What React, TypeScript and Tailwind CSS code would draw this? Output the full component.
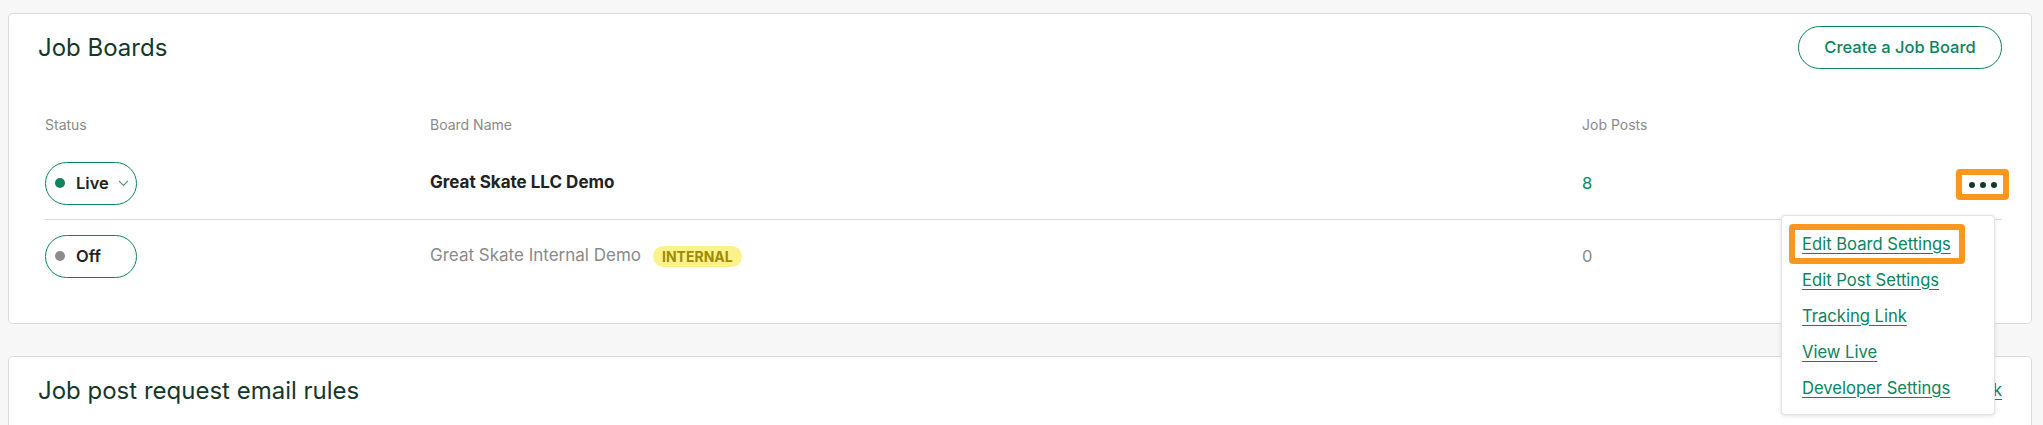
import { useState } from 'react';

const menuItems = [
  'Edit Board Settings',
  'Edit Post Settings',
  'Tracking Link',
  'View Live',
  'Developer Settings',
];

function StatusPill({ live }: { live: boolean }) {
  return (
    <button className="flex h-[43px] w-[92px] items-center rounded-full border border-[#0b8460] pl-[9px]">
      <span
        className={
          live
            ? 'h-[10px] w-[10px] rounded-full bg-[#0b8460]'
            : 'h-[10px] w-[10px] rounded-full bg-[#8c8c8c]'
        }
      />
      <span className="ml-[11px] text-[16.5px] font-semibold text-[#222222]">{live ? 'Live' : 'Off'}</span>
      {live && (
        <svg className="ml-[9px]" width="11" height="7" viewBox="0 0 11 7" fill="none">
          <polyline points="1,1 5.5,5.5 10,1" stroke="#5f8f7c" strokeWidth="1.1" />
        </svg>
      )}
    </button>
  );
}

function ActionsMenu() {
  return (
    <div className="absolute right-[14px] top-[46px] z-10 w-[214px] rounded-[4px] border border-[#e3e3e3] bg-white pt-[10px] pb-[8px] shadow-[0_1px_4px_rgba(0,0,0,0.12)]">
      <div className="pointer-events-none absolute left-[7px] top-[8px] h-[40px] w-[176px] rounded-[4px] border-[6px] border-[#fb961f]" />
      {menuItems.map((item) => (
        <a
          key={item}
          href="#"
          className="flex h-9 items-center pl-5 text-[16.6px] text-[#0b8460] underline underline-offset-[3px]"
        >
          {item}
        </a>
      ))}
    </div>
  );
}

export default function App() {
  const [open] = useState(true);

  return (
    <div className="min-h-screen bg-[#f7f7f7] pt-[13px] pl-2 pr-[11px] font-['Inter',sans-serif]">
      <section className="rounded-[5px] border border-[#d9d9d9] bg-white px-[29px] pt-3 pb-[31px]">
        <div className="flex h-[43px] items-center justify-between">
          <h2 className="text-[24px] text-[#15372c]">Job Boards</h2>
          <button className="h-[43px] w-[204px] rounded-full border border-[#0b8460] text-[16.5px] font-medium text-[#0b8460]">
            Create a Job Board
          </button>
        </div>

        <div className="ml-[7px] mt-[45px]">
          <div className="grid h-5 grid-cols-[385px_1152px_1fr] items-center text-[14px] text-[#8a8a8a]">
            <div>Status</div>
            <div>Board Name</div>
            <div>Job Posts</div>
          </div>

          <div className="mt-[13px] grid h-[73px] grid-cols-[385px_1152px_1fr_auto] items-center border-b border-[#dddddd]">
            <StatusPill live />
            <div className="text-[17px] font-bold text-[#222222]">Great Skate LLC Demo</div>
            <div className="text-[16.5px] text-[#0b8460]">8</div>
            <div className="relative -mr-[7px] mt-[3px]">
              <button className="flex h-[31px] w-[53px] items-center justify-center gap-[5px] rounded-[4px] border-[6px] border-[#fb961f] bg-white">
                <span className="h-[6px] w-[6px] rounded-full bg-[#15372c]" />
                <span className="h-[6px] w-[6px] rounded-full bg-[#15372c]" />
                <span className="h-[6px] w-[6px] rounded-full bg-[#15372c]" />
              </button>
              {open && <ActionsMenu />}
            </div>
          </div>

          <div className="grid h-[72px] grid-cols-[385px_1152px_1fr_auto] items-center">
            <StatusPill live={false} />
            <div className="flex items-center">
              <span className="text-[17px] text-[#8a8a8a]">Great Skate Internal Demo</span>
              <span className="ml-3 flex h-[21px] items-center rounded-full bg-[#fbf28c] px-[9px] text-[14px] font-bold text-[#a08a00]">
                INTERNAL
              </span>
            </div>
            <div className="text-[16.5px] text-[#8a8a8a]">0</div>
            <div />
          </div>
        </div>
      </section>

      <section className="mt-8 h-[120px] rounded-[5px] border border-[#d9d9d9] bg-white px-[29px] pt-3">
        <div className="flex h-[43px] items-center justify-between">
          <h2 className="text-[24px] text-[#15372c]">Job post request email rules</h2>
          <a href="#" className="text-[16.6px] text-[#0b8460] underline underline-offset-[3px]">
            Add Rule Link
          </a>
        </div>
      </section>
    </div>
  );
}
